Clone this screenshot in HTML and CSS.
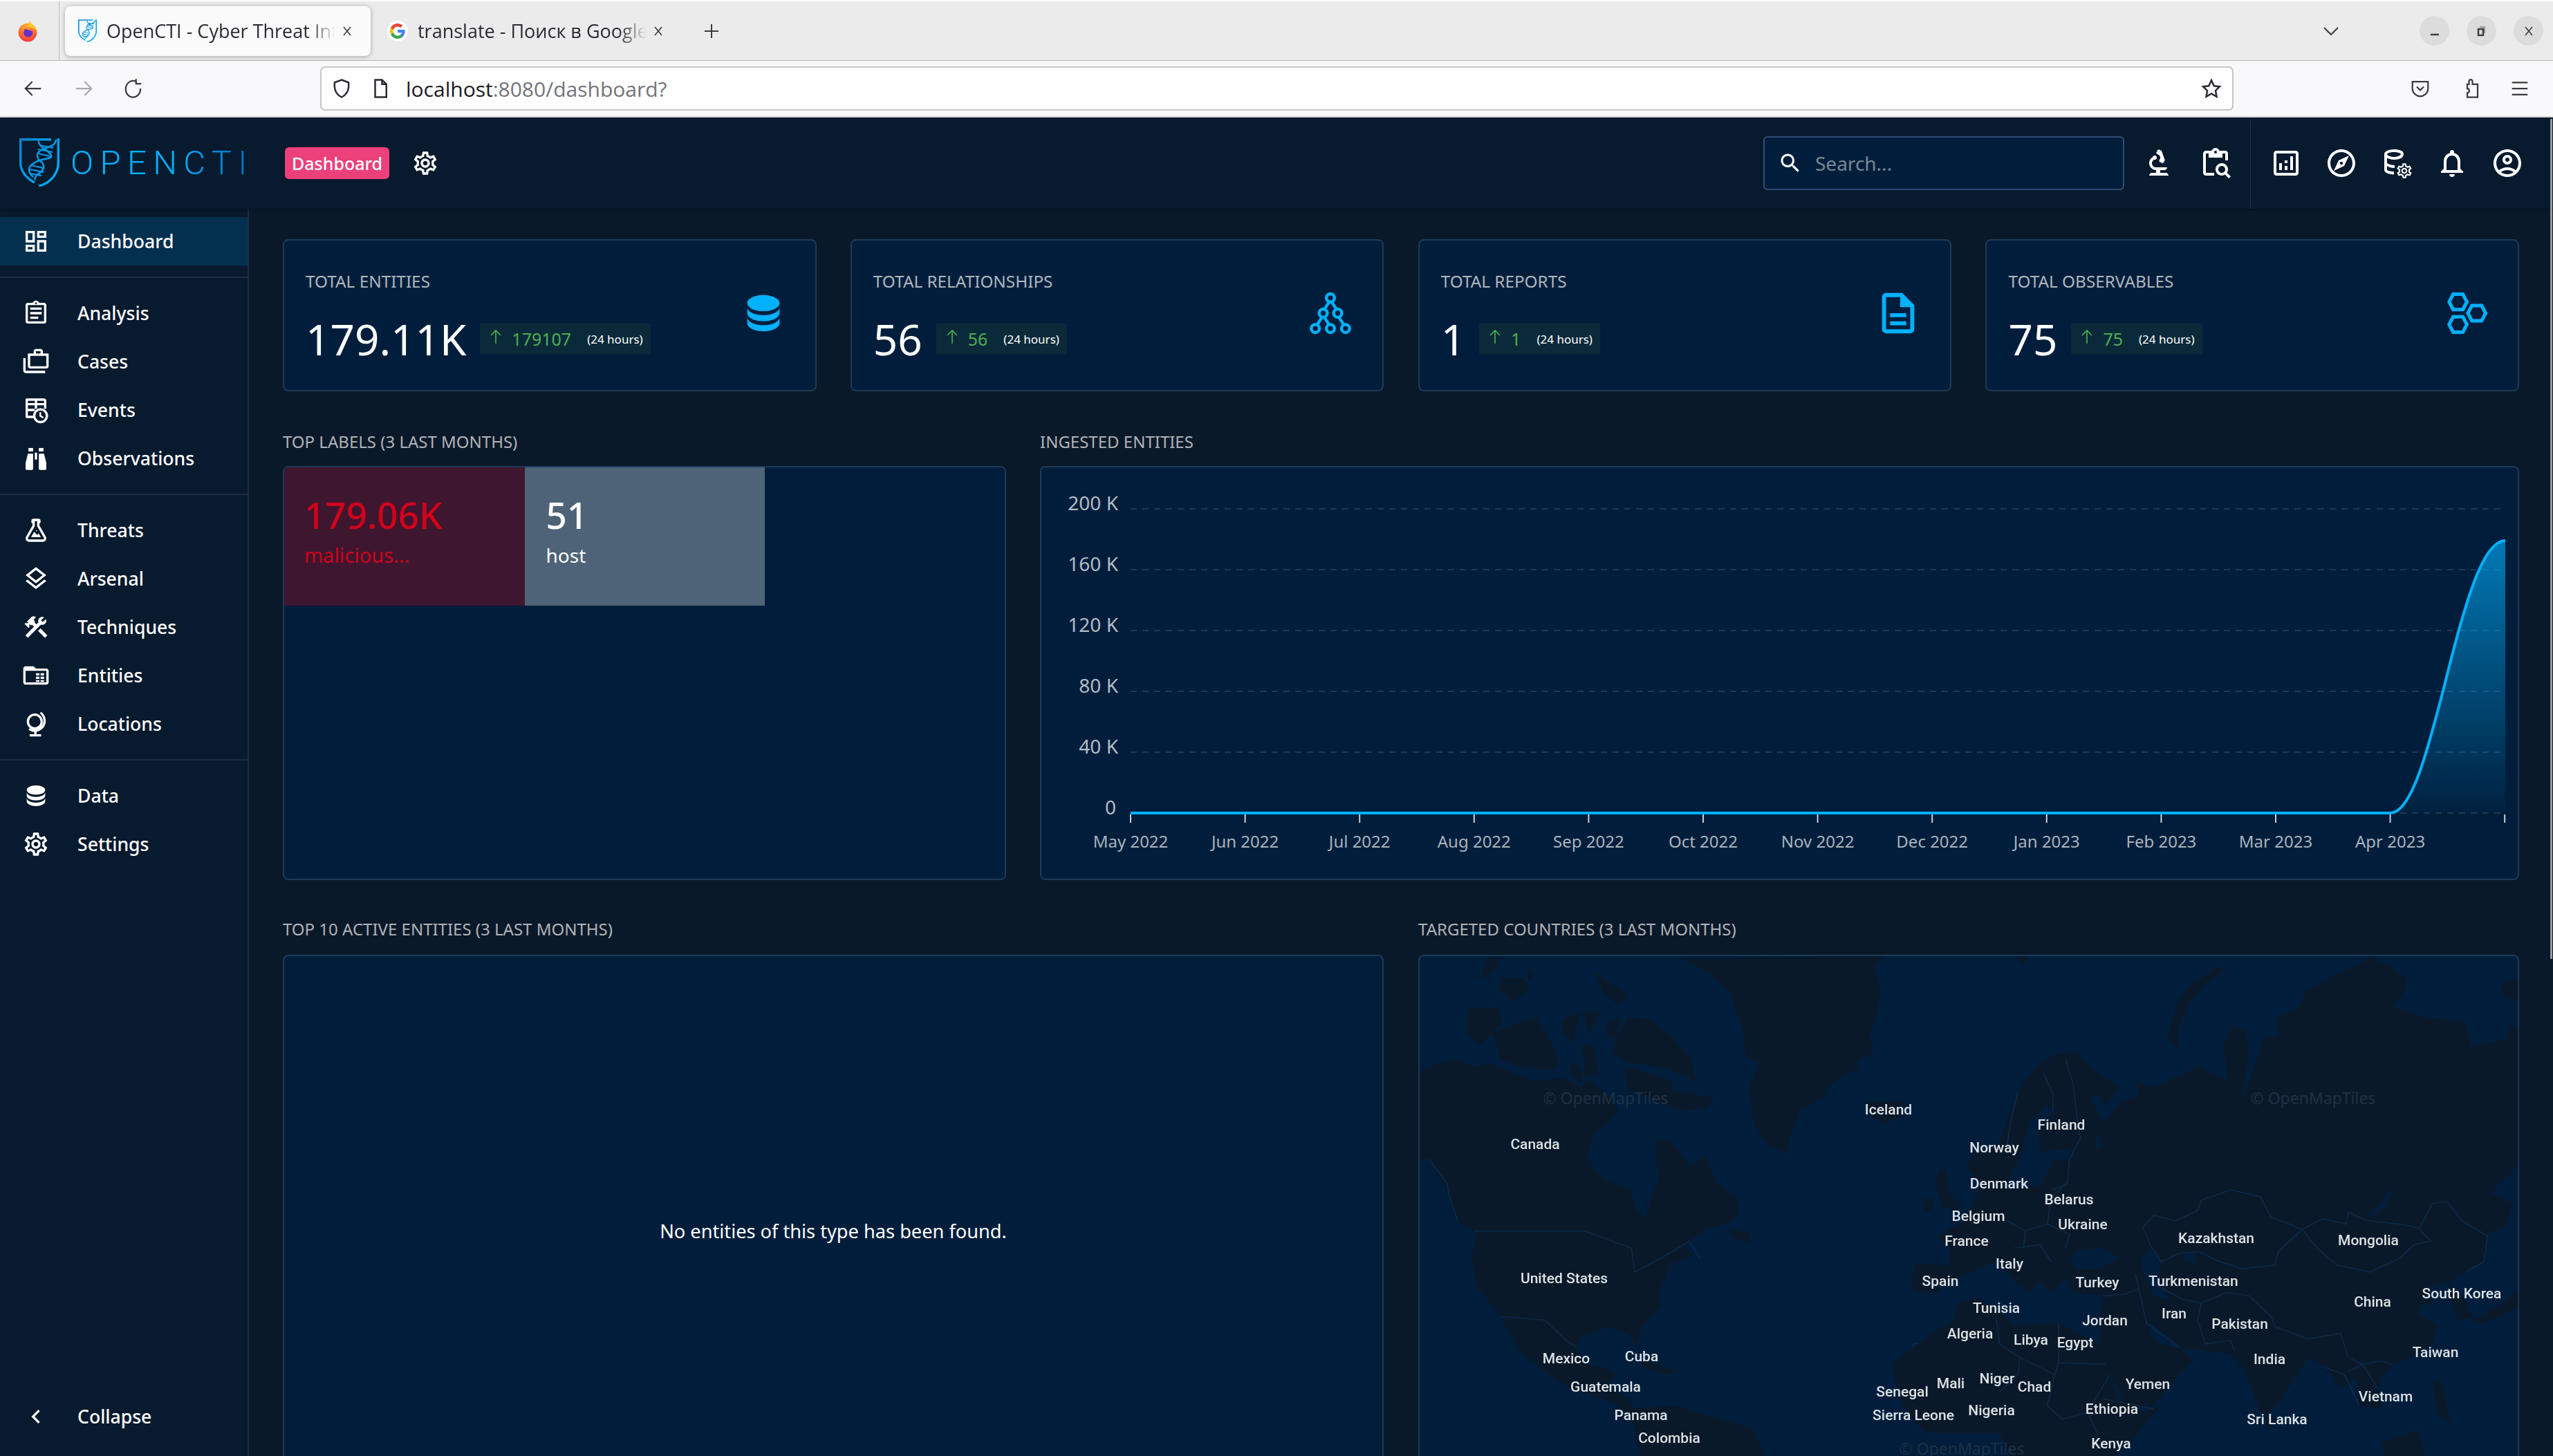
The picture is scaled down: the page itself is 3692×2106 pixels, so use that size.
FILE: index.html
```html
<!DOCTYPE html>
<html lang="en">
<head>
  <meta charset="UTF-8">
  <title>OpenCTI - Cyber Threat Intelligence Platform</title>
  <link rel="stylesheet" href="styles.css">
</head>
<body>

<svg class="sprites" width="0" height="0">
  <defs>
    <linearGradient id="logo-grad" x1="0" y1="0" x2="1" y2="1">
      <stop offset="0" stop-color="#0a84d0"/>
      <stop offset="1" stop-color="#00b1ff"/>
    </linearGradient>
    <radialGradient id="fox-grad" cx="0.5" cy="0.2" r="0.9">
      <stop offset="0" stop-color="#ffbd30"/>
      <stop offset="0.55" stop-color="#ff6a2b"/>
      <stop offset="1" stop-color="#e8274f"/>
    </radialGradient>
    <linearGradient id="area-grad" gradientUnits="userSpaceOnUse" x1="0" y1="106" x2="0" y2="500">
      <stop offset="0" stop-color="#00b1ff" stop-opacity="0.62"/>
      <stop offset="1" stop-color="#00b1ff" stop-opacity="0.02"/>
    </linearGradient>
    <symbol id="logo" viewBox="0 0 58 70">
      <g fill="none" stroke="url(#logo-grad)">
        <path stroke-width="3.4" d="M1.7 1.7H46M1.7 0V36C1.7 47 10 58 22 64"/>
        <path stroke-width="3.4" d="M56.3 0V36C56.3 52 43 66 28 69"/>
        <path stroke-width="2.6" d="M53 2C52 16 28 12 26 24C25 34 36 32 35 42C34 52 20 52 23 60"/>
        <path stroke-width="2.6" d="M28 4C27 14 46 18 46 26C46 31 30 28 18 38C12 43 13 50 20 56"/>
        <path stroke-width="2" d="M29 10L49 14M27 16L48 20M27 22L44 26M17 39L34 43M15 45L35 49M16 51L32 54"/>
      </g>
    </symbol>
    <symbol id="i-gear" viewBox="0 0 24 24"><path d="M19.43 12.98c.04-.32.07-.64.07-.98 0-.34-.03-.66-.07-.98l2.11-1.65c.19-.15.24-.42.12-.64l-2-3.46c-.09-.16-.26-.25-.44-.25-.06 0-.12.01-.17.03l-2.49 1c-.52-.4-1.08-.73-1.69-.98l-.38-2.65C14.46 2.18 14.25 2 14 2h-4c-.25 0-.46.18-.49.42l-.38 2.65c-.61.25-1.17.59-1.69.98l-2.49-1c-.06-.02-.12-.03-.18-.03-.17 0-.34.09-.43.25l-2 3.46c-.13.22-.07.49.12.64l2.11 1.65c-.04.32-.07.65-.07.98 0 .33.03.66.07.98l-2.11 1.65c-.19.15-.24.42-.12.64l2 3.46c.09.16.26.25.44.25.06 0 .12-.01.17-.03l2.49-1c.52.4 1.08.73 1.69.98l.38 2.65c.03.24.24.42.49.42h4c.25 0 .46-.18.49-.42l.38-2.65c.61-.25 1.17-.59 1.69-.98l2.49 1c.06.02.12.03.18.03.17 0 .34-.09.43-.25l2-3.46c.12-.22.07-.49-.12-.64l-2.11-1.65zm-1.98-1.71c.04.31.05.52.05.73 0 .21-.02.43-.05.73l-.14 1.13.89.7 1.08.84-.7 1.21-1.27-.51-1.04-.42-.9.68c-.43.32-.84.56-1.25.73l-1.06.43-.16 1.13-.2 1.35h-1.4l-.19-1.35-.16-1.13-1.06-.43c-.43-.18-.83-.41-1.23-.71l-.91-.7-1.06.43-1.27.51-.7-1.21 1.08-.84.89-.7-.14-1.13c-.03-.31-.05-.54-.05-.74s.02-.43.05-.73l.14-1.13-.89-.7-1.08-.84.7-1.21 1.27.51 1.04.42.9-.68c.43-.32.84-.56 1.25-.73l1.06-.43.16-1.13.2-1.35h1.39l.19 1.35.16 1.13 1.06.43c.43.18.83.41 1.23.71l.91.7 1.06-.43 1.27-.51.7 1.21-1.07.85-.89.7.14 1.13zM12 8c-2.21 0-4 1.79-4 4s1.79 4 4 4 4-1.79 4-4-1.79-4-4-4zm0 6c-1.1 0-2-.9-2-2s.9-2 2-2 2 .9 2 2-.9 2-2 2z"/></symbol>
    <symbol id="i-db" viewBox="0 0 24 24"><path d="M12,3C7.58,3 4,4.79 4,7C4,9.21 7.58,11 12,11C16.42,11 20,9.21 20,7C20,4.79 16.42,3 12,3M4,9V12C4,14.21 7.58,16 12,16C16.42,16 20,14.21 20,12V9C20,11.21 16.42,13 12,13C7.58,13 4,11.21 4,9M4,14V17C4,19.21 7.58,21 12,21C16.42,21 20,19.21 20,17V14C20,16.21 16.42,18 12,18C7.58,18 4,16.21 4,14Z"/></symbol>
  </defs>
</svg>

<div class="browser-tabs">
  <svg class="fox" viewBox="0 0 24 24">
    <circle cx="12" cy="13.5" r="10" fill="url(#fox-grad)"/>
    <path d="M14 0C15 5 21 6 22 12C20 9 16 8 13 7Z" fill="#ffca28"/>
    <circle cx="12.5" cy="13.5" r="5" fill="#6a2fc8"/>
    <path d="M9 9C11 8 16 8 17 12C15 11 11 11 9 9Z" fill="#ff8a2b"/>
  </svg>
  <div class="tabs-sep"></div>
  <div class="tab tab-active">
    <svg class="tab-favicon"><use href="#logo"/></svg>
    <span class="tab-title">OpenCTI - Cyber Threat Intelligence</span>
    <svg class="tab-close" viewBox="0 0 16 16"><path d="M3 2L13 14M13 2L3 14"/></svg>
  </div>
  <div class="tab">
    <svg class="tab-g" viewBox="0 0 24 24">
      <circle cx="12" cy="12" r="12" fill="#fff"/>
      <g transform="translate(2.4 2.4) scale(.8)">
        <path fill="#4285F4" d="M22.56 12.25c0-.78-.07-1.53-.2-2.25H12v4.26h5.92c-.26 1.37-1.04 2.53-2.21 3.31v2.77h3.57c2.08-1.92 3.28-4.74 3.28-8.09z"/>
        <path fill="#34A853" d="M12 23c2.97 0 5.46-.98 7.28-2.66l-3.57-2.77c-.98.66-2.23 1.06-3.71 1.06-2.86 0-5.29-1.93-6.16-4.53H2.18v2.84C3.99 20.53 7.7 23 12 23z"/>
        <path fill="#FBBC05" d="M5.84 14.09c-.22-.66-.35-1.36-.35-2.09s.13-1.43.35-2.09V7.07H2.18C1.43 8.55 1 10.22 1 12s.43 3.45 1.18 4.93l2.85-2.22.81-.62z"/>
        <path fill="#EA4335" d="M12 5.38c1.62 0 3.06.56 4.21 1.64l3.15-3.15C17.45 2.09 14.97 1 12 1 7.7 1 3.99 3.47 2.18 7.07l3.66 2.84c.87-2.6 3.3-4.53 6.16-4.53z"/>
      </g>
    </svg>
    <span class="tab-title">translate - Поиск в Google</span>
    <svg class="tab-close" viewBox="0 0 16 16"><path d="M3 2L13 14M13 2L3 14"/></svg>
  </div>
  <svg class="tab-new" viewBox="0 0 24 24"><path d="M12 2V22M2 12H22"/></svg>
  <svg class="tabs-chevron" viewBox="0 0 24 24"><path d="M2 7L12 17L22 7"/></svg>
  <div class="win-btn"><svg viewBox="0 0 24 24"><path d="M6 17H18" class="win-bold"/></svg></div>
  <div class="win-btn"><svg viewBox="0 0 24 24"><path d="M9 6H16V15" class="win-thin"/><rect x="7" y="9" width="7" height="9" class="win-bold"/></svg></div>
  <div class="win-btn"><svg viewBox="0 0 24 24"><path d="M7 6L17 18M17 6L7 18"/></svg></div>
</div>

<div class="browser-nav">
  <svg class="nav-icon nav-back" viewBox="0 0 24 24"><path d="M21 12H4M11 4L3 12L11 20"/></svg>
  <svg class="nav-icon nav-fwd" viewBox="0 0 24 24"><path d="M3 12H20M13 4L21 12L13 20"/></svg>
  <svg class="nav-icon nav-reload" viewBox="0 0 24 24"><path d="M20 12A8.5 9.5 0 1 1 15 4M15 1V6.5H21"/></svg>
  <div class="url-bar">
    <svg class="url-shield" viewBox="0 0 24 24"><path d="M12 2L20 5C21 13 18 19 12 22C6 19 3 13 4 5Z"/></svg>
    <svg class="url-page" viewBox="0 0 24 24"><path d="M6 2H14L19 7V22H6ZM14 2V7H19"/></svg>
    <span class="url-text">localhost<span class="url-dim">:8080/dashboard?</span></span>
    <svg class="url-star" viewBox="0 0 24 24"><path d="M12 2.5L15 9L21.5 9.8L16.8 14.5L18 21.5L12 18L6 21.5L7.2 14.5L2.5 9.8L9 9Z"/></svg>
  </div>
  <svg class="nav-icon nav-pocket" viewBox="0 0 24 24"><path d="M3 4H21V12C21 18 16 21 12 21C8 21 3 18 3 12ZM8 10L12 14L16 10"/></svg>
  <svg class="nav-icon nav-puzzle" viewBox="0 0 24 24"><path d="M10 4C10 1 14 1 14 4V7H20V22H8V17C11 17 11 12 8 12V7H10Z"/></svg>
  <svg class="nav-icon nav-menu" viewBox="0 0 24 24"><path d="M3 5H21M3 12H21M3 19H21"/></svg>
</div>

<div class="app">
  <div class="scroll-thumb"></div>

  <header class="app-bar">
    <svg class="app-logo"><use href="#logo"/></svg>
    <span class="app-name">OPENCTI</span>
    <span class="pill">Dashboard</span>
    <svg class="bar-gear" viewBox="0 0 24 24"><use href="#i-gear"/></svg>

    <div class="search">
      <svg viewBox="0 0 24 24"><path d="M15.5 14h-.79l-.28-.27C15.41 12.59 16 11.11 16 9.5 16 5.91 13.09 3 9.5 3S3 5.91 3 9.5 5.91 16 9.5 16c1.61 0 3.09-.59 4.23-1.57l.27.28v.79l5 4.99L20.49 19l-4.99-5zm-6 0C7.01 14 5 11.99 5 9.5S7.01 5 9.5 5 14 7.01 14 9.5 11.99 14 9.5 14z"/></svg>
      <span>Search...</span>
    </div>

    <div class="bar-btn"><svg viewBox="0 0 24 24"><path d="M7 19c-1.1 0-2 .9-2 2h14c0-1.1-.9-2-2-2h-4v-2h3c1.1 0 2-.9 2-2h-8c-1.66 0-3-1.34-3-3 0-1.09.59-2.04 1.46-2.56C8.17 9.03 8 8.54 8 8c0-.21.04-.42.09-.62C6.28 8.13 5 9.92 5 12c0 2.76 2.24 5 5 5v2H7zM10.56 5.51C11.91 5.54 13 6.64 13 8c0 .75-.33 1.41-.85 1.87l.59 1.62.94-.34.34.94 1.88-.68-.34-.94.94-.34-2.74-7.52-.94.34-.34-.94-1.88.68.34.94-.94.35.56 1.53zM10.5 8a1.5 1.5 0 1 0-3 0 1.5 1.5 0 1 0 3 0"/></svg></div>
    <div class="bar-btn"><svg viewBox="0 0 24 24"><path d="M5 5h2v3h10V5h2v5h2V5c0-1.1-.9-2-2-2h-4.18C14.4 1.84 13.3 1 12 1s-2.4.84-2.82 2H5c-1.1 0-2 .9-2 2v14c0 1.1.9 2 2 2h6v-2H5V5zm7-2c.55 0 1 .45 1 1s-.45 1-1 1-1-.45-1-1 .45-1 1-1zM20.3 18.9c.4-.7.7-1.5.7-2.4 0-2.5-2-4.5-4.5-4.5S12 14 12 16.5s2 4.5 4.5 4.5c.9 0 1.7-.3 2.4-.7l2.7 2.7 1.4-1.4-2.7-2.7zm-3.8.1c-1.4 0-2.5-1.1-2.5-2.5s1.1-2.5 2.5-2.5 2.5 1.1 2.5 2.5-1.1 2.5-2.5 2.5z"/></svg></div>
    <div class="bar-sep"></div>
    <div class="bar-btn"><svg viewBox="0 0 24 24"><path d="M19 3H5c-1.1 0-2 .9-2 2v14c0 1.1.9 2 2 2h14c1.1 0 2-.9 2-2V5c0-1.1-.9-2-2-2zm0 16H5V5h14v14zM7 12h2v5H7zm8-5h2v10h-2zm-4 7h2v3h-2zm0-4h2v2h-2z"/></svg></div>
    <div class="bar-btn"><svg viewBox="0 0 24 24"><path d="M12 2C6.48 2 2 6.48 2 12s4.48 10 10 10 10-4.48 10-10S17.52 2 12 2zm0 18c-4.41 0-8-3.59-8-8s3.59-8 8-8 8 3.59 8 8-3.59 8-8 8zm-5.5-2.5l7.51-3.49L17.5 6.5 9.99 9.99 6.5 17.5zm5.5-6.6c.61 0 1.1.49 1.1 1.1s-.49 1.1-1.1 1.1-1.1-.49-1.1-1.1.49-1.1 1.1-1.1z"/></svg></div>
    <div class="bar-btn"><svg viewBox="0 0 24 24"><path d="M10 2C6 2 3 3.5 3 5.5V17C3 18.8 6 20 10 20.2V18.2C6.7 18 5 17.2 5 16.8V14.1C6.3 14.9 8.3 15.4 10.5 15.5V13.5C7.4 13.3 5 12.4 5 11.6V8.3C6.5 9.1 8.2 9.5 10 9.5C14 9.5 17 8 17 5.5S14 2 10 2ZM10 4C13 4 15 4.9 15 5.5S13 7.5 10 7.5S5 6.1 5 5.5S7 4 10 4Z"/><use href="#i-gear" x="11" y="11" width="13" height="13"/></svg></div>
    <div class="bar-btn"><svg viewBox="0 0 24 24"><path d="M12 22c1.1 0 2-.9 2-2h-4c0 1.1.89 2 2 2zm6-6v-5c0-3.07-1.64-5.64-4.5-6.32V4c0-.83-.67-1.5-1.5-1.5s-1.5.67-1.5 1.5v.68C7.63 5.36 6 7.92 6 11v5l-2 2v1h16v-1l-2-2zm-2 1H8v-6c0-2.48 1.51-4.5 4-4.5s4 2.02 4 4.5v6z"/></svg></div>
    <div class="bar-btn"><svg viewBox="0 0 24 24"><path d="M12 2C6.48 2 2 6.48 2 12s4.48 10 10 10 10-4.48 10-10S17.52 2 12 2zM7.35 18.5C8.66 17.56 10.26 17 12 17s3.34.56 4.65 1.5c-1.31.94-2.91 1.5-4.65 1.5s-3.34-.56-4.65-1.5zm10.79-1.38C16.45 15.8 14.32 15 12 15s-4.45.8-6.14 2.12C4.7 15.73 4 13.95 4 12c0-4.42 3.58-8 8-8s8 3.58 8 8c0 1.95-.7 3.73-1.86 5.12zM12 6c-1.93 0-3.5 1.57-3.5 3.5S10.07 13 12 13s3.5-1.57 3.5-3.5S13.93 6 12 6zm0 5c-.83 0-1.5-.67-1.5-1.5S11.17 8 12 8s1.5.67 1.5 1.5S12.83 11 12 11z"/></svg></div>
  </header>

  <div class="app-body">
    <nav class="sidebar">
      <ul class="menu">
        <li class="selected"><svg viewBox="0 0 24 24"><path d="M19,5V7H15V5H19M9,5V11H5V5H9M19,13V19H15V13H19M9,17V19H5V17H9M21,3H13V9H21V3M11,3H3V13H11V3M21,11H13V21H21V11M11,15H3V21H11V15Z"/></svg>Dashboard</li>
      </ul>
      <ul class="menu">
        <li><svg viewBox="0 0 24 24"><path d="M7 15h7v2H7zm0-4h10v2H7zm0-4h10v2H7zm12-4h-4.18C14.4 1.84 13.3 1 12 1c-1.3 0-2.4.84-2.82 2H5c-1.1 0-2 .9-2 2v14c0 1.1.9 2 2 2h14c1.1 0 2-.9 2-2V5c0-1.1-.9-2-2-2zm-7-.25c.41 0 .75.34.75.75s-.34.75-.75.75-.75-.34-.75-.75.34-.75.75-.75zM19 19H5V5h14v14z"/></svg>Analysis</li>
        <li><svg viewBox="0 0 24 24"><path d="M3,9H1v11c0,1.11,0.89,2,2,2h17v-2H3V9z M18,5V3c0-1.11-0.89-2-2-2h-4c-1.11,0-2,0.89-2,2v2H5v11c0,1.11,0.89,2,2,2h14c1.11,0,2-0.89,2-2V5H18z M12,3h4v2h-4V3z M21,16H7V7h14V16z"/></svg>Cases</li>
        <li><svg viewBox="0 0 24 24"><path d="M4 2H19C20.1 2 21 2.9 21 4V11H19V8H13V11H11V8H5V11H11V13H5V17H10V19H4C2.9 19 3 18.1 3 17V4C3 2.9 2.9 2 4 2ZM5 4V6H11V4ZM13 4V6H19V4Z"/><path d="M16 10.5A6.5 6.5 0 1 0 16 23.5A6.5 6.5 0 1 0 16 10.5ZM16 12.5A4.5 4.5 0 1 1 16 21.5A4.5 4.5 0 1 1 16 12.5ZM15 14V17.5L18 19.3L18.8 18.1L16.5 16.7V14Z"/></svg>Events</li>
        <li><svg viewBox="0 0 24 24"><path d="M11,7H13V13H11V7M9.5,21A1,1 0 0,1 8.5,22H4A1,1 0 0,1 3,21V16L5,8H9.5V21M14.5,21V8H19L21,16V21A1,1 0 0,1 20,22H15.5A1,1 0 0,1 14.5,21M14.5,3H18.5V6H14.5V3M5.5,3H9.5V6H5.5V3Z"/></svg>Observations</li>
      </ul>
      <ul class="menu">
        <li><svg viewBox="0 0 24 24"><path d="M5,19A1,1 0 0,0 6,20H18A1,1 0 0,0 19,19C19,18.79 18.93,18.59 18.82,18.43L13,8.35V4H11V8.35L5.18,18.43C5.07,18.59 5,18.79 5,19M6,22A3,3 0 0,1 3,19C3,18.4 3.18,17.84 3.5,17.37L9,7.81V6A1,1 0 0,1 8,5V4A2,2 0 0,1 10,2H14A2,2 0 0,1 16,4V5A1,1 0 0,1 15,6V7.81L20.5,17.37C20.82,17.84 21,18.4 21,19A3,3 0 0,1 18,22H6M13,16L14.34,14.66L16.27,18H7.73L10.39,13.39L13,16M12.5,12A0.5,0.5 0 0,1 13,12.5A0.5,0.5 0 0,1 12.5,13A0.5,0.5 0 0,1 12,12.5A0.5,0.5 0 0,1 12.5,12Z"/></svg>Threats</li>
        <li><svg viewBox="0 0 24 24"><path d="M11.99 18.54l-7.37-5.73L3 14.07l9 7 9-7-1.63-1.27zM12 16l7.36-5.73L21 9l-9-7-9 7 1.63 1.27L12 16zm0-11.47L17.74 9 12 13.47 6.26 9 12 4.53z"/></svg>Arsenal</li>
        <li><svg viewBox="0 0 24 24"><path d="M13.78 15.3L19.78 21.3L21.89 19.14L15.89 13.14L13.78 15.3M17.5 10.1C17.11 10.1 16.69 10.05 16.36 9.91L4.97 21.25L2.86 19.14L10.27 11.74L8.5 9.96L7.78 10.66L6.33 9.25V12.11L5.63 12.81L2.11 9.25L2.81 8.55H5.62L4.22 7.14L7.78 3.58C8.95 2.41 10.83 2.41 12 3.58L9.89 5.74L11.3 7.14L10.59 7.85L12.38 9.63L14.2 7.75C14.06 7.42 14 7 14 6.63C14 4.66 15.56 3.11 17.5 3.11C18.09 3.11 18.61 3.25 19.08 3.53L16.41 6.2L17.91 7.7L20.58 5.03C20.86 5.5 21 6 21 6.63C21 8.55 19.45 10.1 17.5 10.1Z"/></svg>Techniques</li>
        <li><svg viewBox="0 0 24 24"><path d="M3 4H10L12 6H21C22.1 6 23 6.9 23 8V18C23 19.1 22.1 20 21 20H3C1.9 20 1 19.1 1 18V6C1 4.9 1.9 4 3 4ZM3 8V18H21V8ZM12 10H15V12H12ZM16 10H19V12H16ZM12 13H15V15H12ZM16 13H19V15H16ZM12 16H15V17.5H12ZM16 16H19V17.5H16Z" fill-rule="evenodd"/></svg>Entities</li>
        <li><svg viewBox="0 0 24 24"><path d="M11 3A7 7 0 1 0 11 17A7 7 0 1 0 11 3ZM11 5A5 5 0 1 1 11 15A5 5 0 1 1 11 5ZM16.5 1.5L15.5 3C17.5 4.5 18.5 7 18.5 9.5C18.5 13.5 15 17 11 17C9.5 17 8 16.5 7 15.5L5.5 17C7 18.3 8.8 19 10.5 19.1V21H6.5V23H16.5V21H12.5V18.9C17 18.2 20.5 14.3 20.5 9.5C20.5 6.3 19 3.4 16.5 1.5Z"/></svg>Locations</li>
      </ul>
      <ul class="menu">
        <li><svg viewBox="0 0 24 24"><use href="#i-db"/></svg>Data</li>
        <li><svg viewBox="0 0 24 24"><use href="#i-gear"/></svg>Settings</li>
      </ul>
      <div class="collapse"><svg viewBox="0 0 24 24"><path d="M15.41 7.41L14 6l-6 6 6 6 1.41-1.41L10.83 12z"/></svg>Collapse</div>
    </nav>

    <main class="content">
      <section class="stats">
        <div class="stat-card">
          <div>
            <div class="stat-title">TOTAL ENTITIES</div>
            <div class="stat-row">
              <span class="stat-number">179.11K</span>
              <span class="stat-diff">
                <svg viewBox="0 0 20 24"><path d="M10 22V3M3 10L10 3L17 10"/></svg>
                <span class="diff-value">179107</span>
                <span class="diff-period">(24 hours)</span>
              </span>
            </div>
          </div>
          <svg class="stat-icon" viewBox="0 0 24 24"><use href="#i-db"/></svg>
        </div>
        <div class="stat-card">
          <div>
            <div class="stat-title">TOTAL RELATIONSHIPS</div>
            <div class="stat-row">
              <span class="stat-number">56</span>
              <span class="stat-diff">
                <svg viewBox="0 0 20 24"><path d="M10 22V3M3 10L10 3L17 10"/></svg>
                <span class="diff-value">56</span>
                <span class="diff-period">(24 hours)</span>
              </span>
            </div>
          </div>
          <svg class="stat-icon stat-icon-line" viewBox="0 0 24 24">
            <path d="M11.5 6.3L9 10M12.5 6.3L15 10M7.8 14.1L5.3 17.8M9 14.1L11.4 17.8M16.2 14.1L18.7 17.8"/>
            <circle cx="12" cy="4.4" r="2"/><circle cx="8.4" cy="12" r="2"/><circle cx="15.6" cy="12" r="2"/>
            <circle cx="4.5" cy="19.6" r="2"/><circle cx="12" cy="19.6" r="2"/><circle cx="19.5" cy="19.6" r="2"/>
          </svg>
        </div>
        <div class="stat-card">
          <div>
            <div class="stat-title">TOTAL REPORTS</div>
            <div class="stat-row">
              <span class="stat-number">1</span>
              <span class="stat-diff">
                <svg viewBox="0 0 20 24"><path d="M10 22V3M3 10L10 3L17 10"/></svg>
                <span class="diff-value">1</span>
                <span class="diff-period">(24 hours)</span>
              </span>
            </div>
          </div>
          <svg class="stat-icon" viewBox="0 0 24 24"><path d="M8 16h8v2H8zm0-4h8v2H8zm6-10H6c-1.1 0-2 .9-2 2v16c0 1.1.89 2 1.99 2H18c1.1 0 2-.9 2-2V8l-6-6zm4 18H6V4h7v5h5v11z"/></svg>
        </div>
        <div class="stat-card">
          <div>
            <div class="stat-title">TOTAL OBSERVABLES</div>
            <div class="stat-row">
              <span class="stat-number">75</span>
              <span class="stat-diff">
                <svg viewBox="0 0 20 24"><path d="M10 22V3M3 10L10 3L17 10"/></svg>
                <span class="diff-value">75</span>
                <span class="diff-period">(24 hours)</span>
              </span>
            </div>
          </div>
          <svg class="stat-icon stat-icon-line stat-icon-hex" viewBox="0 0 24 24">
            <path d="M5.7 2.6H10.5L12.5 6.4L10.5 10.2H5.7L3.7 6.4Z"/>
            <path d="M15 8.2H19.8L21.8 12L19.8 15.8H15L13 12Z"/>
            <path d="M5.7 13.8H10.5L12.5 17.6L10.5 21.4H5.7L3.7 17.6Z"/>
          </svg>
        </div>
      </section>

      <section class="row-charts">
        <div>
          <h3 class="block-title">TOP LABELS (3 LAST MONTHS)</h3>
          <div class="panel panel-labels">
            <div class="treemap">
              <div class="tree-cell tree-red">
                <div class="tree-num">179.06K</div>
                <div class="tree-name">malicious...</div>
              </div>
              <div class="tree-cell tree-gray">
                <div class="tree-num">51</div>
                <div class="tree-name">host</div>
              </div>
            </div>
          </div>
        </div>
        <div>
          <h3 class="block-title">INGESTED ENTITIES</h3>
          <div class="panel panel-labels">
            <svg class="chart" viewBox="0 0 2135 595">
              <g class="grid-lines">
                <path d="M129 60H2117M129 148H2117M129 236H2117M129 324H2117M129 412H2117M129 500H2117"/>
              </g>
              <g class="y-labels">
                <text x="111" y="62">200 K</text>
                <text x="111" y="150">160 K</text>
                <text x="111" y="238">120 K</text>
                <text x="111" y="326">80 K</text>
                <text x="111" y="414">40 K</text>
                <text x="108" y="502">0</text>
              </g>
              <path class="chart-area" d="M1951 500C2014 500 2049 106 2117 106V500Z"/>
              <path class="chart-line" d="M129 500H1951C2014 500 2049 106 2117 106"/>
              <path class="x-ticks" d="M129 502V514M294.6 502V514M460.2 502V514M625.8 502V514M791.4 502V514M957 502V514M1122.6 502V514M1288.2 502V514M1453.8 502V514M1619.4 502V514M1785 502V514M1950.6 502V514M2116.2 502V514"/>
              <g class="x-labels">
                <text x="129" y="550">May 2022</text>
                <text x="294.6" y="550">Jun 2022</text>
                <text x="460.2" y="550">Jul 2022</text>
                <text x="625.8" y="550">Aug 2022</text>
                <text x="791.4" y="550">Sep 2022</text>
                <text x="957" y="550">Oct 2022</text>
                <text x="1122.6" y="550">Nov 2022</text>
                <text x="1288.2" y="550">Dec 2022</text>
                <text x="1453.8" y="550">Jan 2023</text>
                <text x="1619.4" y="550">Feb 2023</text>
                <text x="1785" y="550">Mar 2023</text>
                <text x="1950.6" y="550">Apr 2023</text>
              </g>
            </svg>
          </div>
        </div>
      </section>

      <section class="row-bottom">
        <div>
          <h3 class="block-title">TOP 10 ACTIVE ENTITIES (3 LAST MONTHS)</h3>
          <div class="panel panel-tall panel-empty">No entities of this type has been found.</div>
        </div>
        <div>
          <h3 class="block-title">TARGETED COUNTRIES (3 LAST MONTHS)</h3>
          <div class="panel panel-tall">
            <svg class="map" viewBox="2053 1383 1588 794">
              <!-- west half -->
              <g class="land" transform="translate(2040 1330) scale(.523 .495)">
                <path d="M10,450 L60,425 L130,408 L175,430 L220,420 L280,445 L330,470 L370,470 L420,460 L470,490 L490,470 L530,500 L555,520 L575,560 L540,600 L510,625 L490,680 L500,720 L540,760 L610,790 L625,850 L650,870 L665,810 L685,760 L675,640 L720,650 L770,720 L815,690 L850,770 L900,810 L910,850 L880,890 L830,900 L780,930 L760,960 L780,980 L720,1010 L690,1080 L690,1130 L640,1190 L630,1230 L640,1260 L600,1210 L550,1190 L470,1220 L460,1250 L480,1300 L540,1310 L570,1330 L540,1360 L600,1400 L620,1430 L730,1420 L860,1460 L950,1490 L990,1600 L640,1600 L610,1450 L560,1410 L440,1370 L370,1320 L300,1260 L250,1160 L180,1070 L170,990 L180,915 L130,885 L100,790 L50,700 L10,705 Z"/>
                <path d="M160,260 L240,255 L255,300 L190,370 L155,330Z"/>
                <path d="M215,110 L250,110 L230,150 L190,180 L200,145Z"/>
                <path d="M250,170 L310,170 L330,200 L285,240 L245,210Z"/>
                <path d="M325,145 L340,150 L335,180 L320,170Z"/>
                <path d="M225,330 L300,300 L350,290 L410,400 L400,440 L300,430 L250,410Z"/>
                <path d="M420,290 L470,270 L450,360 L420,330Z"/>
                <path d="M480,270 L525,270 L490,340Z"/>
                <path d="M475,360 L510,370 L520,450 L480,460Z"/>
                <path d="M440,420 L470,430 L475,480 L440,450Z"/>
                <path d="M500,150 L560,190 L600,220 L570,250 L530,210 L520,180Z"/>
                <path d="M540,300 L580,285 L570,350 L545,340Z"/>
                <path d="M600,285 L660,290 L720,340 L780,410 L785,470 L720,440 L640,420 L600,420 L555,385Z"/>
                <path d="M600,430 L660,450 L720,470 L730,500 L840,520 L820,550 L760,560 L700,540 L600,500 L590,440Z"/>
                <path d="M750,115 L1310,105 L1285,140 L1300,200 L1290,280 L1270,330 L1280,390 L1235,410 L1240,430 L1165,480 L1140,520 L1080,555 L1050,630 L1040,685 L990,660 L950,600 L935,490 L965,420 L925,400 L920,330 L885,220 L830,160Z"/>
                <path d="M1255,535 L1320,530 L1360,530 L1360,570 L1310,600 L1280,580Z"/>
                <path d="M1460,730 L1480,730 L1490,800 L1520,830 L1510,850 L1470,840 L1450,770Z"/>
                <path d="M1420,820 L1445,810 L1445,850 L1420,855Z"/>
                <path d="M880,900 L935,915 L940,945 L890,930Z"/>
                <path d="M640,1285 L740,1320 L700,1330 L640,1305Z"/>
              </g>
              <g class="borders" transform="translate(2040 1330) scale(.523 .495)">
                <path d="M175,910 H480 L610,960 L620,1030 L700,985 L770,940 L800,990"/>
                <path d="M50,700 L100,770 L105,800 L130,880"/>
                <path d="M250,1160 L370,1170 L430,1230 L460,1250"/>
                <path d="M1330,1305 L1390,1300 L1390,1240 L1450,1240 L1560,1330 M1450,1260 L1450,1330 L1568,1400"/>
                <path d="M1420,1030 L1500,1015"/>
              </g>
              <!-- east half -->
              <g class="land" transform="translate(2860 1330) scale(.5305 .495)">
                <path d="M210,395 L270,385 L300,425 L385,490 L350,545 L330,510 L305,520 L345,590 L385,540 L440,510 L430,470 L480,490 L600,430 L680,470 L670,360 L695,310 L730,325 L740,380 L720,530 L760,410 L780,345 L820,340 L815,290 L880,250 L890,210 L960,170 L1040,130 L1070,110 L1130,140 L1170,170 L1165,210 L1130,255 L1220,285 L1330,300 L1345,370 L1440,350 L1450,310 L1477,320 L1490,320 L1490,700 L1400,800 L1460,830 L1440,900 L1390,920 L1380,1000 L1330,1030 L1280,1060 L1230,1070 L1240,1130 L1215,1120 L1200,1150 L1255,1190 L1240,1240 L1180,1280 L1130,1300 L1100,1340 L1090,1370 L1100,1430 L1040,1420 L1030,1340 L990,1370 L950,1310 L900,1280 L830,1400 L790,1450 L770,1440 L730,1320 L690,1270 L610,1260 L550,1250 L590,1290 L540,1340 L480,1420 L410,1430 L360,1330 L330,1240 L340,1100 L260,1090 L240,1050 L200,1090 L170,1060 L140,1090 L100,1060 L60,1000 L20,1010 L-40,1040 L-100,1065 L-105,1090 L-170,1090 L-185,1060 L-170,1005 L-80,1010 L-75,960 L-110,930 L-40,880 L-10,830 L10,770 L-30,730 L-10,680 L50,670 L80,590 L110,500 L160,430 Z"/>
                <path d="M-235,1300 L-145,1225 L-67,1170 L-57,1120 L0,1105 L60,1150 L100,1185 L220,1180 L330,1240 L380,1400 L450,1440 L500,1420 L430,1510 L340,1600 L100,1600 L60,1500 L-140,1500 L-170,1470 L-215,1400 Z"/>
                <path d="M685,140 L650,140 L580,190 L545,240 L530,300 L515,340 L550,385 L545,320 L580,240 L620,190 Z"/>
                <path d="M105,108 L135,108 L125,135Z"/>
                <path d="M1425,190 L1460,175 L1490,190 L1490,240 L1440,230Z"/>
                <path d="M1285,1060 L1330,1110 L1350,1165 L1310,1170 L1290,1120Z"/>
                <path d="M1350,1170 L1420,1130 L1477,1080 L1490,1040 L1490,1120 L1430,1160 L1370,1180Z"/>
                <path d="M1100,1530 L1200,1490 L1230,1600 L1120,1600Z"/>
                <path d="M1240,1350 L1265,1345 L1290,1470 L1250,1440Z"/>
                <path d="M785,1450 L805,1450 L805,1490 L785,1490Z"/>
              </g>
              <g class="water" transform="translate(2860 1330) scale(.5305 .495)">
                <path d="M80,790 L170,775 L205,705 L265,695 L245,670 L170,680 L165,620 L205,560 L185,540 L140,600 L115,700 L85,760Z"/>
                <path d="M280,965 L340,960 L385,990 L330,1020 L270,1020 L250,990Z"/>
                <path d="M470,960 L500,1000 L495,1060 L525,1110 L480,1100 L455,1040 L445,1000Z"/>
                <path d="M470,1180 L540,1240 L555,1255 L500,1240 L470,1210Z"/>
                <path d="M1125,785 L1130,800 L1110,840 L1070,870 L1065,860 L1100,830Z"/>
                <path d="M560,975 L590,970 L595,1000 L565,1000Z"/>
                <path d="M320,625 L340,660 L325,670Z"/>
              </g>
              <g class="borders" transform="translate(2860 1330) scale(.5305 .495)">
                <path d="M240,410 L260,480 L270,570 L280,640 L250,700 L245,770 L205,790"/>
                <path d="M180,450 L205,510 L205,560 M110,500 L90,590 L80,660"/>
                <path d="M925,960 L885,905 L940,875 L1005,890 L1010,855 L1060,880 L1150,890 L1200,900 L1235,940 L1190,950 L1150,990 L1070,1030 L980,1010 L925,960"/>
                <path d="M450,900 L480,865 L540,880 L600,850 L610,820 L690,790 L770,810 L800,870 L885,905 L820,970 L810,1010 L720,1020 L660,1000 L600,970 L550,975 L500,1000 L470,950 L450,900"/>
                <path d="M1205,900 L1240,830 L1280,825 L1320,880 L1390,925 L1380,1000 L1330,1030"/>
                <path d="M810,1190 L900,1225 L990,1210 L1010,1280 L1050,1300 L1100,1290 L1130,1300"/>
                <path d="M1010,1320 L1050,1300 L1090,1370 M950,1310 L1000,1330 L1040,1420"/>
                <path d="M610,1120 L600,1170 L620,1240 L690,1230 L700,1260 M610,1120 L680,1090 L740,1100 L800,1160 L810,1190"/>
                <path d="M430,1040 L440,1080 L460,1180 L550,1250 M340,1100 L400,1095 L440,1080 M470,1060 L560,1110 L610,1120"/>
                <path d="M80,880 L130,910 L190,890 L250,920 L240,960 M190,890 L200,810 L245,770 M100,960 L170,950 L200,1000 M130,910 L125,960"/>
                <path d="M350,1300 L220,1295 L220,1180 M220,1295 L210,1330 L115,1280 L60,1240 L50,1160 M115,1280 L110,1330 L60,1380"/>
                <path d="M210,1330 L190,1420 L230,1460 L300,1440 L360,1330 M340,1400 L480,1430 M300,1440 L330,1510"/>
              </g>
              <g class="map-credits">
                <text x="2322" y="1597">© OpenMapTiles</text>
                <text x="3345" y="1597">© OpenMapTiles</text>
                <text x="2837" y="2104">© OpenMapTiles</text>
              </g>
              <g class="map-labels">
                <text x="2220" y="1655">Canada</text>
                <text x="2731" y="1605">Iceland</text>
                <text x="2262" y="1849">United States</text>
                <text x="2265" y="1965">Mexico</text>
                <text x="2374" y="1962">Cuba</text>
                <text x="2322" y="2006">Guatemala</text>
                <text x="2373" y="2047">Panama</text>
                <text x="2414" y="2080">Colombia</text>
                <text x="2751" y="2013">Senegal</text>
                <text x="2767" y="2047">Sierra Leone</text>
                <text x="2821" y="2001">Mali</text>
                <text x="2806" y="1853">Spain</text>
                <text x="2981" y="1627">Finland</text>
                <text x="2884" y="1660">Norway</text>
                <text x="2891" y="1712">Denmark</text>
                <text x="2861" y="1759">Belgium</text>
                <text x="2844" y="1795">France</text>
                <text x="2992" y="1735">Belarus</text>
                <text x="3012" y="1771">Ukraine</text>
                <text x="2906" y="1828">Italy</text>
                <text x="3205" y="1791">Kazakhstan</text>
                <text x="3425" y="1794">Mongolia</text>
                <text x="3033" y="1855">Turkey</text>
                <text x="3172" y="1853">Turkmenistan</text>
                <text x="2887" y="1892">Tunisia</text>
                <text x="2849" y="1929">Algeria</text>
                <text x="3044" y="1910">Jordan</text>
                <text x="3144" y="1900">Iran</text>
                <text x="3239" y="1915">Pakistan</text>
                <text x="2937" y="1938">Libya</text>
                <text x="3001" y="1942">Egypt</text>
                <text x="3431" y="1883">China</text>
                <text x="3560" y="1871">South Korea</text>
                <text x="3522" y="1956">Taiwan</text>
                <text x="3282" y="1966">India</text>
                <text x="2888" y="1994">Niger</text>
                <text x="2942" y="2006">Chad</text>
                <text x="3106" y="2002">Yemen</text>
                <text x="3450" y="2020">Vietnam</text>
                <text x="3293" y="2053">Sri Lanka</text>
                <text x="3054" y="2038">Ethiopia</text>
                <text x="2880" y="2040">Nigeria</text>
                <text x="3053" y="2088">Kenya</text>
              </g>
            </svg>
          </div>
        </div>
      </section>
    </main>
  </div>
</div>

</body>
</html>
```

FILE: styles.css
```css
html, body {
  height: 100%;
}
body {
  margin: 0;
  overflow: hidden;
  font-family: "Noto Sans", "Open Sans", sans-serif;
  background-color: #0a1929;
  color: #fff;
  display: flex;
  flex-direction: column;
}
.sprites {
  position: absolute;
}
ul {
  list-style: none;
  margin: 0;
  padding: 0;
}
h3 {
  margin: 0;
  font-weight: 400;
}
svg {
  display: block;
  flex-shrink: 0;
}

/* browser chrome */
.browser-tabs {
  height: 85px;
  border-top: 2px solid #fbfbfb;
  border-bottom: 1px solid #b5b5b5;
  background-color: #ebebeb;
  display: flex;
  align-items: center;
  color: #2b2a33;
  font-family: "Open Sans", sans-serif;
  font-size: 27px;
}
.fox {
  width: 32px;
  height: 32px;
  margin-left: 24px;
}
.tabs-sep {
  width: 1px;
  height: 85px;
  margin-left: 29px;
  background-color: #b9b9b9;
}
.tab {
  width: 442px;
  height: 72px;
  padding-left: 19px;
  box-sizing: border-box;
  display: flex;
  align-items: center;
  border-radius: 8px;
}
.tab-active {
  margin-left: 8px;
  background-color: #fbfbfb;
  box-shadow: 0 1px 6px rgba(0, 0, 0, 0.3);
}
.tab-active + .tab {
  width: 440px;
  padding-left: 24px;
}
.tab-favicon {
  width: 27px;
  height: 33px;
}
.tab-g {
  width: 30px;
  height: 30px;
}
.tab-title {
  width: 331px;
  margin-left: 14px;
  white-space: nowrap;
  overflow: hidden;
  -webkit-mask-image: linear-gradient(to right, #000 88%, transparent);
  mask-image: linear-gradient(to right, #000 88%, transparent);
}
.tab-close {
  width: 16px;
  height: 20px;
  margin-left: 9px;
  fill: none;
  stroke: #3a3a40;
  stroke-width: 1.6;
}
.tab-new {
  width: 24px;
  height: 26px;
  margin-left: 41px;
  fill: none;
  stroke: #3a3a40;
  stroke-width: 2;
}
.tabs-chevron {
  width: 24px;
  height: 24px;
  margin-left: auto;
  fill: none;
  stroke: #3a3a40;
  stroke-width: 2;
}
.win-btn {
  width: 43px;
  height: 43px;
  margin-left: 25px;
  border-radius: 50%;
  background-color: #dcdcdc;
  display: flex;
  align-items: center;
  justify-content: center;
}
.tabs-chevron + .win-btn {
  margin-left: 116px;
}
.win-btn:last-child {
  margin-right: 14px;
}
.win-btn svg {
  width: 24px;
  height: 24px;
  fill: none;
  stroke: #3a3a40;
  stroke-width: 1.6;
}
.win-btn .win-bold {
  stroke-width: 2.4;
}
.win-btn .win-thin {
  stroke: #888;
}
.browser-nav {
  height: 80px;
  border-bottom: 2px solid #e2e2e2;
  background-color: #f9f9fb;
  display: flex;
  align-items: center;
  font-family: "Open Sans", sans-serif;
}
.nav-icon {
  width: 30px;
  height: 30px;
  fill: none;
  stroke: #3a3a40;
  stroke-width: 1.8;
}
.nav-back {
  margin-left: 33px;
}
.nav-fwd {
  margin-left: 43px;
  stroke: #a9a9ad;
}
.nav-reload {
  margin-left: 42px;
}
.url-bar {
  flex: 1;
  height: 64px;
  margin-left: 255px;
  box-sizing: border-box;
  border: 2px solid #c6c6c6;
  border-radius: 7px;
  background-color: #fff;
  display: flex;
  align-items: center;
  padding-left: 14px;
}
.url-bar svg {
  width: 30px;
  height: 32px;
  fill: none;
  stroke: #2b2a33;
  stroke-width: 2;
}
.url-page {
  margin-left: 26px;
}
.url-text {
  margin-left: 22px;
  font-size: 30px;
  color: #1c1b22;
}
.url-dim {
  color: #73737a;
}
.url-bar .url-star {
  margin-left: auto;
  margin-right: 15px;
}
.nav-pocket {
  margin-left: 255px;
}
.nav-puzzle {
  margin-left: 43px;
}
.nav-menu {
  margin-left: 41px;
  margin-right: 33px;
}

/* application */
.app {
  flex: 1;
  min-height: 0;
  position: relative;
  display: flex;
  flex-direction: column;
}
.scroll-thumb {
  position: absolute;
  top: 2px;
  right: 1px;
  width: 3px;
  height: 1215px;
  background-color: #9b9b9b;
  z-index: 5;
}
.app-bar {
  height: 132px;
  flex-shrink: 0;
  box-sizing: border-box;
  background-color: #071a2e;
  box-shadow: 0 1px 4px rgba(0, 0, 0, 0.35);
  display: flex;
  align-items: center;
  padding: 0 26px 0 28px;
  position: relative;
  z-index: 2;
}
.app-logo {
  width: 58px;
  height: 70px;
  margin-bottom: 3px;
}
.app-name {
  width: 262px;
  margin-left: 16px;
  font-family: Roboto, sans-serif;
  font-weight: 300;
  font-size: 49px;
  line-height: 60px;
  letter-spacing: 9.3px;
  white-space: nowrap;
  background: linear-gradient(to right, #00b1ff 58%, #0079c8 92%);
  -webkit-background-clip: text;
  background-clip: text;
  color: transparent;
}
.pill {
  height: 46px;
  margin-left: 48px;
  padding: 0 10px;
  border-radius: 6px;
  background-color: #ec407a;
  font-size: 25px;
  font-weight: 500;
  line-height: 46px;
  white-space: nowrap;
}
.bar-gear {
  width: 40px;
  height: 40px;
  margin-left: 32px;
  fill: #fff;
}
.search {
  width: 522px;
  height: 78px;
  margin-left: auto;
  box-sizing: border-box;
  border: 2px solid #2d4f73;
  border-radius: 6px;
  background-color: #001e3c;
  display: flex;
  align-items: center;
  padding-left: 19px;
  color: #7a8794;
  font-size: 28px;
}
.search svg {
  width: 36px;
  height: 36px;
  fill: #fff;
  margin-right: 18px;
}
.bar-btn {
  width: 80px;
  display: flex;
  justify-content: center;
}
.search + .bar-btn {
  margin-left: 10px;
}
.search + .bar-btn + .bar-btn {
  margin-left: 2px;
}
.bar-btn svg {
  width: 48px;
  height: 48px;
  fill: #fff;
}
.bar-sep {
  width: 1px;
  align-self: stretch;
  margin: 3px 11px 0 10px;
  background-color: #24384e;
}
.app-body {
  flex: 1;
  min-height: 0;
  display: flex;
}

/* sidebar */
.sidebar {
  width: 358px;
  flex-shrink: 0;
  border-right: 2px solid #1f2e42;
  background-color: #071a2e;
  display: flex;
  flex-direction: column;
  padding-top: 12px;
  box-sizing: content-box;
}
.menu {
  padding-bottom: 16px;
  margin-bottom: 16px;
  border-bottom: 2px solid #1f2e42;
}
.menu:nth-of-type(4) {
  border-bottom: 0;
}
.menu li, .collapse {
  height: 70px;
  display: flex;
  align-items: center;
  padding-left: 32px;
  font-size: 26.6px;
  font-weight: 500;
}
.menu li svg, .collapse svg {
  width: 40px;
  height: 40px;
  margin-right: 40px;
  fill: #fff;
}
.menu li.selected {
  background-color: #04304f;
}
.collapse {
  margin-top: auto;
  margin-bottom: 22px;
}

/* main content */
.content {
  flex: 1;
  min-width: 0;
  padding: 44px 49px 0;
}
.stats {
  display: grid;
  grid-template-columns: repeat(4, 1fr);
  column-gap: 49.3px;
}
.panel, .stat-card {
  box-sizing: border-box;
  border: 2px solid #1e3a58;
  border-radius: 8px;
  background-color: #001e3c;
}
.stat-card {
  height: 220px;
  display: flex;
  justify-content: space-between;
  align-items: center;
  padding: 0 40px 0 31px;
}
.stat-title {
  font-size: 24.3px;
  line-height: 30px;
  color: #b0b6bc;
}
.stat-row {
  display: flex;
  align-items: center;
  margin-top: 38px;
  height: 60px;
}
.stat-number {
  font-size: 62px;
  line-height: 60px;
  margin-right: 20px;
}
.stat-diff {
  height: 44px;
  padding: 0 11px 0 13px;
  background-color: #0a2a3a;
  display: flex;
  align-items: center;
  white-space: nowrap;
}
.stat-diff svg {
  width: 20px;
  height: 24px;
  margin-bottom: 6px;
  fill: none;
  stroke: #4caf50;
  stroke-width: 1.6;
}
.diff-value {
  margin-left: 13px;
  font-size: 25px;
  color: #4caf50;
}
.diff-period {
  margin-left: 23px;
  font-size: 17px;
}
.stat-icon {
  width: 70px;
  height: 70px;
  margin-top: -6px;
  fill: #00b1ff;
}
.stat-icon-line {
  fill: none;
  stroke: #00b1ff;
  stroke-width: 1.5;
}
.stat-icon-hex {
  stroke-width: 1.7;
}
.block-title {
  font-size: 24px;
  line-height: 34px;
  margin-bottom: 18px;
  color: #b0b3b8;
}
.row-charts {
  display: grid;
  grid-template-columns: 1046px 1fr;
  column-gap: 49px;
  margin-top: 56px;
}
.panel-labels {
  height: 599px;
}
.treemap {
  display: flex;
  height: 200px;
}
.tree-cell {
  width: 347.5px;
  box-sizing: border-box;
  padding: 41px 0 0 31px;
}
.tree-red {
  background-color: #3e162f;
  color: #d0021b;
  border-top-left-radius: 6px;
  padding-left: 29px;
}
.tree-gray {
  background-color: #4e6378;
}
.tree-num {
  font-size: 53px;
  font-weight: 500;
  line-height: 56px;
}
.tree-name {
  margin-top: 10px;
  font-size: 29px;
  line-height: 40px;
}
.tree-gray .tree-name {
  font-size: 28px;
}
.chart {
  width: 100%;
  height: 100%;
}
.grid-lines path {
  fill: none;
  stroke: #1c3a57;
  stroke-width: 2;
  stroke-dasharray: 9 8;
}
.y-labels text {
  fill: #b4bcc4;
  font-size: 28px;
  text-anchor: end;
}
.x-labels text {
  fill: #a9b3bd;
  font-size: 24px;
  text-anchor: middle;
}
.chart-area {
  fill: url(#area-grad);
}
.chart-line {
  fill: none;
  stroke: #00b1ff;
  stroke-width: 4;
}
.x-ticks {
  stroke: #c8d0d8;
  stroke-width: 2;
}
.row-bottom {
  display: grid;
  grid-template-columns: 1fr 1fr;
  column-gap: 50px;
  margin-top: 54px;
}
.row-bottom .block-title {
  margin-bottom: 20px;
}
.panel-tall {
  height: 798px;
  overflow: hidden;
}
.panel-empty {
  display: flex;
  align-items: center;
  justify-content: center;
  font-size: 27.2px;
}

/* map */
.map {
  width: 100%;
  height: 100%;
}
.land path {
  fill: #0a1929;
}
.water path {
  fill: #001e3c;
}
.borders path {
  fill: none;
  stroke: #0e2a4a;
  stroke-width: 3;
}
.map-credits text {
  fill: #1f3044;
  font-size: 23px;
  text-anchor: middle;
}
.map-labels {
  filter: blur(0.7px);
}
.map-labels text {
  fill: #dde2e6;
  font-family: Roboto, sans-serif;
  font-size: 21px;
  font-weight: 500;
  text-anchor: middle;
  dominant-baseline: central;
}
```
